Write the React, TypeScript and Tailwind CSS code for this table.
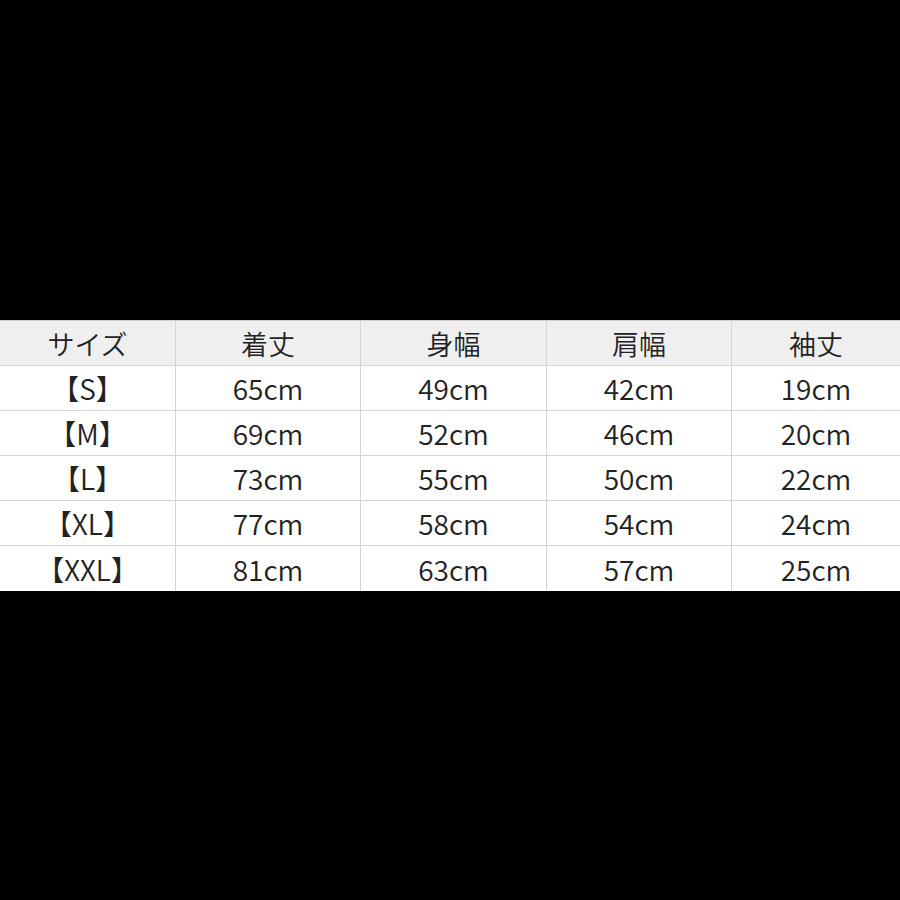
const HEAD = ['サイズ', '着丈', '身幅', '肩幅', '袖丈'];

const ROWS = [
  ['【S】', '65cm', '49cm', '42cm', '19cm'],
  ['【M】', '69cm', '52cm', '46cm', '20cm'],
  ['【L】', '73cm', '55cm', '50cm', '22cm'],
  ['【XL】', '77cm', '58cm', '54cm', '24cm'],
  ['【XXL】', '81cm', '63cm', '57cm', '25cm'],
];

const COLS = 'grid grid-cols-[175px_185px_186px_185px_1fr]';

export default function App() {
  return (
    <div className="w-[900px] h-[900px] bg-black pt-[320px] font-['Noto_Sans_CJK_JP','Noto_Sans',sans-serif] text-[#222]">
      <div className="bg-white border-t border-[#cfcfcf]">
        {/* Header row */}
        <div className={`${COLS} h-[45px] bg-[#efefef] border-b border-[#d4d4d4]`}>
          {HEAD.map((h, i) => (
            <div
              key={h}
              className={`flex items-center justify-center text-[27px] font-[350] leading-none ${i > 0 ? 'border-l border-[#d4d4d4]' : ''}`}
            >
              {h}
            </div>
          ))}
        </div>
        {/* Size rows */}
        {ROWS.map((row, r) => (
          <div
            key={row[0]}
            className={`${COLS} h-[45px] ${r < ROWS.length - 1 ? 'border-b border-[#d4d4d4]' : ''}`}
          >
            {row.map((cell, i) => (
              <div
                key={i}
                className={`flex items-center justify-center text-[28px] font-[350] leading-none ${i > 0 ? 'border-l border-[#d4d4d4]' : ''}`}
              >
                {cell}
              </div>
            ))}
          </div>
        ))}
      </div>
    </div>
  );
}
